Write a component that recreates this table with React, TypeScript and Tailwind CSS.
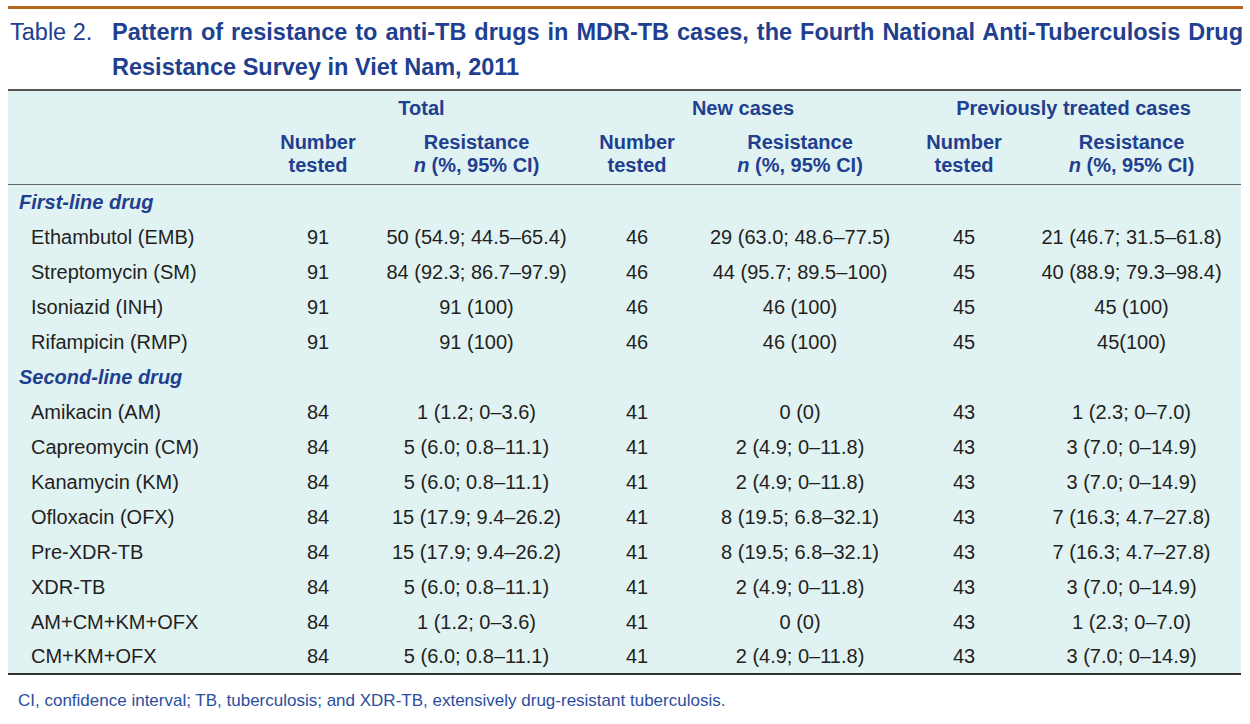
type Row = [string, string, string, string, string, string, string];

const firstLine: Row[] = [
  ["Ethambutol (EMB)", "91", "50 (54.9; 44.5–65.4)", "46", "29 (63.0; 48.6–77.5)", "45", "21 (46.7; 31.5–61.8)"],
  ["Streptomycin (SM)", "91", "84 (92.3; 86.7–97.9)", "46", "44 (95.7; 89.5–100)", "45", "40 (88.9; 79.3–98.4)"],
  ["Isoniazid (INH)", "91", "91 (100)", "46", "46 (100)", "45", "45 (100)"],
  ["Rifampicin (RMP)", "91", "91 (100)", "46", "46 (100)", "45", "45(100)"],
];

const secondLine: Row[] = [
  ["Amikacin (AM)", "84", "1 (1.2; 0–3.6)", "41", "0 (0)", "43", "1 (2.3; 0–7.0)"],
  ["Capreomycin (CM)", "84", "5 (6.0; 0.8–11.1)", "41", "2 (4.9; 0–11.8)", "43", "3 (7.0; 0–14.9)"],
  ["Kanamycin (KM)", "84", "5 (6.0; 0.8–11.1)", "41", "2 (4.9; 0–11.8)", "43", "3 (7.0; 0–14.9)"],
  ["Ofloxacin (OFX)", "84", "15 (17.9; 9.4–26.2)", "41", "8 (19.5; 6.8–32.1)", "43", "7 (16.3; 4.7–27.8)"],
  ["Pre-XDR-TB", "84", "15 (17.9; 9.4–26.2)", "41", "8 (19.5; 6.8–32.1)", "43", "7 (16.3; 4.7–27.8)"],
  ["XDR-TB", "84", "5 (6.0; 0.8–11.1)", "41", "2 (4.9; 0–11.8)", "43", "3 (7.0; 0–14.9)"],
  ["AM+CM+KM+OFX", "84", "1 (1.2; 0–3.6)", "41", "0 (0)", "43", "1 (2.3; 0–7.0)"],
  ["CM+KM+OFX", "84", "5 (6.0; 0.8–11.1)", "41", "2 (4.9; 0–11.8)", "43", "3 (7.0; 0–14.9)"],
];

const SectionRow = ({ label }: { label: string }) => (
  <tr className="h-[35px]">
    <td colSpan={7} className="pl-[11px] text-[20px] font-bold italic text-[#213f8f]">
      {label}
    </td>
  </tr>
);

const DataRow = ({ row }: { row: Row }) => (
  <tr className="h-[35px] text-[20px] text-[#231f20]">
    <td className="pl-[23px] text-left">{row[0]}</td>
    {row.slice(1).map((cell, i) => (
      <td key={i} className="text-center">
        {cell}
      </td>
    ))}
  </tr>
);

const SubHead = () => (
  <>
    <th className="text-center align-middle font-bold leading-[23px]">
      Number
      <br />
      tested
    </th>
    <th className="text-center align-middle font-bold leading-[23px]">
      Resistance
      <br />
      <span className="italic">n</span> (%, 95% CI)
    </th>
  </>
);

export default function App() {
  return (
    <div className="min-h-[724px] w-[1250px] bg-white pt-[6px] font-['Liberation_Sans',Arial,sans-serif]">
      <div className="ml-2 h-[3px] w-[1235px] bg-[#b5651d]" />

      <div className="mt-[5px] ml-[10px] flex w-[1233px] leading-[36px] text-[#213f8f]">
        <span className="w-[102px] shrink-0 text-[23.5px]">Table 2.</span>
        <div className="flex-1 text-[23.5px] font-bold">
          <div className="text-justify [text-align-last:justify]">
            Pattern of resistance to anti-TB drugs in MDR-TB cases, the Fourth National Anti-Tuberculosis Drug
          </div>
          <div className="-mt-[1px]">Resistance Survey in Viet Nam, 2011</div>
        </div>
      </div>

      <table className="mt-[4px] ml-2 w-[1233px] table-fixed border-collapse bg-[#e1f2f2]">
        <colgroup>
          <col className="w-[255px]" />
          <col className="w-[110px]" />
          <col className="w-[207px]" />
          <col className="w-[114px]" />
          <col className="w-[212px]" />
          <col className="w-[116px]" />
          <col className="w-[219px]" />
        </colgroup>
        <thead className="text-[20px] text-[#213f8f]">
          <tr className="h-[34px] border-t-2 border-[#555]">
            <th />
            <th colSpan={2} className="text-center font-bold">
              Total
            </th>
            <th colSpan={2} className="text-center font-bold">
              New cases
            </th>
            <th colSpan={2} className="text-center font-bold">
              Previously treated cases
            </th>
          </tr>
          <tr className="h-[60px] border-b border-[#666]">
            <th />
            <SubHead />
            <SubHead />
            <SubHead />
          </tr>
        </thead>
        <tbody className="border-b-2 border-[#333]">
          <SectionRow label="First-line drug" />
          {firstLine.map((r) => (
            <DataRow key={r[0]} row={r} />
          ))}
          <SectionRow label="Second-line drug" />
          {secondLine.map((r) => (
            <DataRow key={r[0]} row={r} />
          ))}
        </tbody>
      </table>

      <p className="mt-[16px] ml-[18px] text-[17px] leading-[20px] text-[#2b4e9e]">
        CI, confidence interval; TB, tuberculosis; and XDR-TB, extensively drug-resistant tuberculosis.
      </p>
    </div>
  );
}
